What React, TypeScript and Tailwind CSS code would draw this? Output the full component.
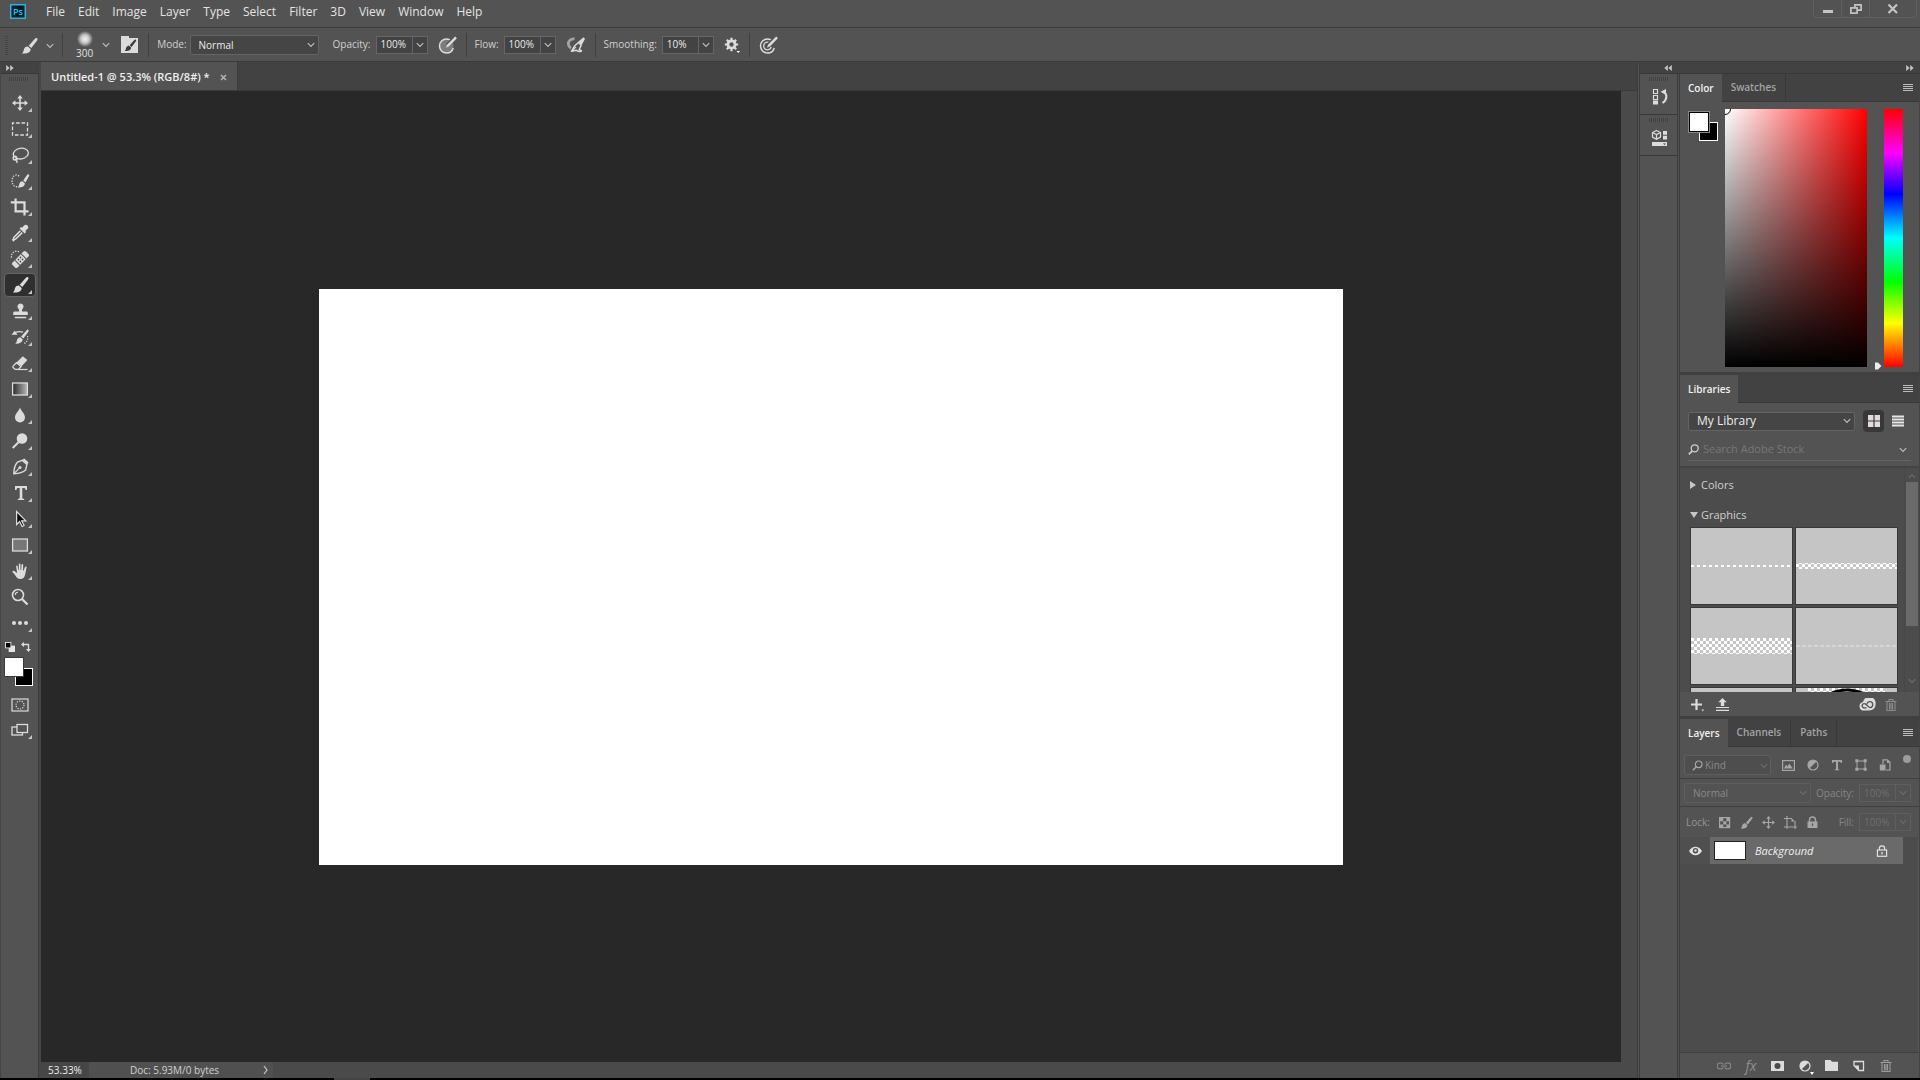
import React, { useState } from "react";
import type { ReactNode } from "react";

const L = "#dcdcdc";

function Svg({ size = 20, className = "", children }: { size?: number; className?: string; children: ReactNode }) {
  return (
    <svg width={size} height={size} viewBox={`0 0 ${size} ${size}`} fill="none" className={`shrink-0 ${className}`} aria-hidden="true">
      {children}
    </svg>
  );
}

const BRUSH_TIP = "M18 2.2c.9.7.6 1.500-.1 2.500l-5.600 7.300-2.600-2.200 6-6.800c.8-.9 1.500-1.400 2.300-.8Z";
const BRUSH_BODY = "M8.900 10.600l2.700 2.300c.4 3-3.100 5.300-8.900 4.500 2-1.100 1.600-2.600 2.400-4.500.7-1.600 2.300-2.500 3.800-2.300Z";

function Brush({ color = L }: { color?: string }) {
  return (
    <g fill={color}>
      <path d={BRUSH_TIP} />
      <path d={BRUSH_BODY} />
    </g>
  );
}

function Chevron({ className = "", dark = false }: { className?: string; dark?: boolean }) {
  return (
    <svg width="8" height="6" viewBox="0 0 8 6" className={`shrink-0 ${className}`} aria-hidden="true">
      <path d="M0.800 1.200 4 4.400 7.200 1.200" fill="none" stroke={dark ? "#6c6c6c" : "#bdbdbd"} strokeWidth="1.200" />
    </svg>
  );
}

const tools: { name: string; icon: ReactNode; plain?: boolean }[] = [
  {
    name: "Move",
    icon: (
      <>
        <path d="M10 4v12M4 10h12" stroke={L} strokeWidth="1.600" />
        <path d="M10 2l2.800 3.400H7.200ZM10 18l2.800-3.400H7.200ZM2 10l3.400-2.800v5.600ZM18 10l-3.400-2.800v5.600Z" fill={L} />
      </>
    ),
  },
  { name: "Marquee", icon: <rect x="2.500" y="4" width="15" height="12" stroke={L} strokeWidth="1.300" strokeDasharray="3.600 1.800" strokeDashoffset="1.800" /> },
  {
    name: "Lasso",
    icon: (
      <g stroke={L} strokeWidth="1.300">
        <ellipse cx="10.800" cy="8.600" rx="7.600" ry="5.300" transform="rotate(-10 10.800 8.600)" />
        <circle cx="5" cy="13" r="1.900" />
        <path d="M5.400 14.500c1.500.8 2 2 1.400 3.600M3.600 14.200c1 .8 2.500.6 4.200-.6" />
      </g>
    ),
  },
  {
    name: "Quick selection",
    icon: (
      <>
        <path d="M9 5.200A4.300 5.900 0 1 0 8 15.300" stroke={L} strokeWidth="1.300" strokeDasharray="1.300 1.300" />
        <path d="M18.800 3.400c.7.600.4 1.300 0 2.100l-3.300 6-2.300-2 3.800-5.400c.5-.8 1.100-1.200 1.800-.7Z" fill={L} />
        <path d="M12.400 10.300l2.400 2c.2 2.800-2.700 4.800-7.200 3.900 1.600-.9 1.300-2.300 1.900-3.800.6-1.400 1.700-2.200 2.900-2.100Z" fill={L} />
      </>
    ),
  },
  { name: "Crop", icon: <path d="M5.600 1.500v12.800h12.900M.8 5.400h13.700v13.100" stroke={L} strokeWidth="2.200" /> },
  {
    name: "Eyedropper",
    icon: (
      <>
        <path d="M17.500 2.400c1.200 1.300.9 2.700-.2 3.700l-2 1.900.8.900-1.500 1.500-5-5 1.500-1.500.9.8 1.800-2c1-1.200 2.500-1.500 3.700-.3Z" fill={L} />
        <path d="M10.200 7.400l-6.400 6.500c-.7.800-.3 1.600-1 2.700.9.900.9.900 0 0 1.100-.6 2-.3 2.700-1l6.500-6.400" transform="translate(.2 .4)" stroke={L} strokeWidth="1.600" />
      </>
    ),
  },
  {
    name: "Spot healing",
    icon: (
      <>
        <path d="M9 2.600a5.500 5 0 0 0-7.200 6.600" stroke={L} strokeWidth="1.300" strokeDasharray="1.300 1.300" />
        <g transform="rotate(-45 10.500 10.500)">
          <rect x="1" y="7" width="19" height="7" rx="1.800" fill={L} />
          <path d="M6 7v7M15 7v7" stroke="#535353" />
          <g fill="#4a4a4a">
            <circle cx="9" cy="9.100" r=".9" />
            <circle cx="12" cy="9.100" r=".9" />
            <circle cx="9" cy="11.900" r=".9" />
            <circle cx="12" cy="11.900" r=".9" />
          </g>
        </g>
      </>
    ),
  },
  { name: "Brush", icon: <Brush /> },
  {
    name: "Clone stamp",
    icon: <path d="M10.500 2.500a3 3 0 0 1 2.300 5c-.9 1.100-.9 1.700-.8 3h4.500c.8 0 1.300.6 1.300 1.400V14H3.200v-2.100c0-.8.500-1.400 1.300-1.400H9c.1-1.300.1-1.900-.8-3a3 3 0 0 1 2.300-5ZM4.800 15.700h11.400v1.600H4.800Z" fill={L} />,
  },
  {
    name: "History brush",
    icon: (
      <>
        <path d="M18.300 2.900c.7.600.4 1.200-.1 2l-4.900 6.500-2.200-1.900 5.400-6c.6-.8 1.200-1.200 1.800-.6Z" fill={L} />
        <path d="M10.300 10.200l2.300 2c.3 2.600-2.600 4.700-7.600 4.600 1.900-1.100 1.500-2.500 2.100-4.100.6-1.500 1.900-2.500 3.200-2.500Z" fill={L} />
        <path d="M4.500 5.700c3-1.200 6-1.300 8.500-.6" stroke={L} strokeWidth="1.200" />
        <path d="M1.500 7.800l3.200-4 2.800 4Z" fill={L} />
        <path d="M17.500 9c1 3-.5 6.200-3.500 7.500" stroke={L} strokeWidth="1.200" strokeDasharray="1.200 1.300" />
      </>
    ),
  },
  {
    name: "Eraser",
    icon: (
      <>
        <path d="M12.800 3.200l4.600 3.700-5.800 6.400-5-3.900Z" fill={L} />
        <path d="M6.400 9.700l4.700 3.800-2.600 2.900H5.200L3 14.600c-.4-.5-.3-1 .1-1.500Z" stroke={L} strokeWidth="1.300" />
        <path d="M7 16.500h10.500" stroke={L} strokeWidth="1.200" />
      </>
    ),
  },
  {
    name: "Gradient",
    icon: (
      <>
        <defs>
          <linearGradient id="toolGradient">
            <stop offset="0" stopColor="#2a2a2a" />
            <stop offset="1" stopColor="#b8b8b8" />
          </linearGradient>
        </defs>
        <rect x="2.600" y="4" width="14.800" height="12" fill="url(#toolGradient)" stroke={L} strokeWidth="1.300" />
      </>
    ),
  },
  { name: "Blur", icon: <path d="M10 2.500c1 3.500 5 6 5 10a5 5 0 0 1-10 0c0-4 4-6.500 5-10Z" fill={L} /> },
  {
    name: "Dodge",
    icon: (
      <>
        <circle cx="12" cy="7.500" r="5.300" fill={L} />
        <path d="M8.500 11.200L2.700 17" stroke={L} strokeWidth="2" />
      </>
    ),
  },
  {
    name: "Pen",
    icon: (
      <>
        <path d="M12.400 3.400l4.500 4.200-1.300 5.500c-2 2-5.600 3.500-11.800 3.600.2-5.900 1.700-9.500 3.600-11.500Z" stroke={L} strokeWidth="1.400" />
        <path d="M12.300 2.800l2-1.200 4.300 4-1.400 1.900Z" fill={L} />
        <path d="M4.200 16.300l5.200-5.200" stroke={L} strokeWidth="1.200" />
        <circle cx="10" cy="10.400" r="1.500" fill={L} />
      </>
    ),
  },
  {
    name: "Type",
    icon: <path d="M5 3h12v4h-1.500c-.1-1.400-.6-1.900-1.800-1.900h-1.400v9.600c0 .8.400 1.100 1.900 1.200V17H7.800v-1.100c1.500-.1 1.900-.4 1.900-1.200V5.100H8.300C7.100 5.100 6.600 5.600 6.500 7H5Z" fill={L} />,
  },
  { name: "Path selection", icon: <path d="M6.600 2.500v13l3-2.900 2.500 4.900 2-1-2.500-4.700h4.200Z" fill="#0c0c0c" stroke={L} strokeWidth="1.200" /> },
  { name: "Rectangle", icon: <rect x="2.600" y="4" width="14.800" height="12" fill="#777" stroke={L} strokeWidth="1.300" /> },
  {
    name: "Hand",
    icon: (
      <path
        d="M6.100 5.200c0-1.100 1.500-1.100 1.600 0L8.300 9h.5V3.300c0-1.200 1.700-1.200 1.700 0V9h.6l.4-5.100c.1-1.100 1.700-1 1.700.1L13 9.600h.6l1.400-3.500c.5-1 1.900-.5 1.600.5-1 3.700-.8 6-2 8.700-.8 1.800-1.700 2.600-4 2.600-2.600 0-3.700-.9-4.700-2.600-.9-1.400-1.900-2.500-3.300-4-.8-.9.3-2 1.400-1.500 1 .5 1.800 1.200 2.500 1.900h.6Z"
        fill={L}
      />
    ),
  },
  {
    name: "Zoom",
    plain: true,
    icon: (
      <>
        <circle cx="8" cy="8" r="5.500" stroke={L} strokeWidth="1.600" />
        <path d="M5.300 8a2.800 2.800 0 0 1 2.700-2.700" stroke={L} strokeWidth="1.100" />
        <path d="M12 12l5.500 5.500" stroke={L} strokeWidth="2.300" />
      </>
    ),
  },
  {
    name: "More tools",
    icon: (
      <g fill={L}>
        <circle cx="4" cy="10" r="2" />
        <circle cx="10" cy="10" r="2" />
        <circle cx="16" cy="10" r="2" />
      </g>
    ),
  },
];

function ToolButton({ name, plain, active, onPick, children }: { name: string; plain?: boolean; active?: boolean; onPick?: () => void; children: ReactNode }) {
  return (
    <button
      aria-label={name}
      onClick={onPick}
      className={`relative my-px flex h-6 w-8 shrink-0 items-center justify-center rounded-sm border ${active ? "border-[#666] bg-[#2f2f2f]" : "border-transparent"}`}
    >
      <Svg>{children}</Svg>
      {!plain && (
        <svg width="4" height="4" viewBox="0 0 4 4" className="absolute bottom-[2px] right-[3px]" aria-hidden="true">
          <path d="M4 0v4H0Z" fill="#c4c4c4" />
        </svg>
      )}
    </button>
  );
}

function Grip({ wide = false }: { wide?: boolean }) {
  return wide ? (
    <div className="h-1 w-5 shrink-0 bg-[repeating-linear-gradient(90deg,#404040_0_1px,#565656_1px_2px)]" />
  ) : (
    <div className="h-5 w-[3px] shrink-0 bg-[repeating-linear-gradient(0deg,#434343_0_1px,#565656_1px_2px)]" />
  );
}

function Rule() {
  return <div className="h-6 w-px shrink-0 bg-[#404040]" />;
}

function PercentField({ id, label, value, dim = false }: { id: string; label: string; value: string; dim?: boolean }) {
  return (
    <div className="flex items-center gap-[5px]">
      <label htmlFor={id} className={dim ? "text-[#868686]" : "text-[#d0d0d0]"}>
        {label}
      </label>
      <div className={`flex h-[18px] items-stretch border ${dim ? "border-[#5e5e5e] text-[#6f6f6f]" : "border-[#666] bg-[#434343] text-[#ececec]"}`}>
        <input id={id} defaultValue={value} className="w-[35px] bg-transparent pl-1 outline-none" />
        <button aria-label={`${label} slider`} className={`flex w-[15px] items-center justify-center border-l ${dim ? "border-[#5e5e5e]" : "border-[#666]"}`}>
          <Chevron dark={dim} />
        </button>
      </div>
    </div>
  );
}

function SelectBox({ label, value, className, dim = false }: { label: string; value: string; className: string; dim?: boolean }) {
  return (
    <div className={`relative flex items-stretch rounded-[2px] border ${dim ? "border-[#5e5e5e] text-[#8a8a8a]" : "border-[#646464] bg-[#454545] text-[#ececec]"} ${className}`}>
      <select aria-label={label} className="w-full appearance-none bg-transparent pl-2 outline-none">
        <option>{value}</option>
      </select>
      <Chevron dark={dim} className="pointer-events-none absolute right-[3px] top-1/2 -translate-y-1/2" />
    </div>
  );
}

function PressureIcon({ rings }: { rings?: boolean }) {
  return (
    <Svg>
      <circle cx="8.500" cy="11" r="7" stroke={L} strokeWidth="1.500" fill={rings ? "none" : "#7c7c7c"} strokeDasharray="36 8" strokeDashoffset="-2" />
      {rings && <circle cx="8.500" cy="11" r="3.800" stroke={L} strokeWidth="1.300" strokeDasharray="19 5" strokeDashoffset="-1" />}
      <path d="M9.500 10L17.500 2" stroke="#535353" strokeWidth="4" />
      <path d="M17.200 1.600l1.700 1.700-7.800 7.900-3.200 1.500 1.400-3.200Z" fill={L} />
    </Svg>
  );
}

function AirbrushIcon() {
  return (
    <Svg>
      <path d="M8.500 4C4.800 3.500 2 6 2.400 9.400c.2 1.700 1.100 3 2.600 3.800" stroke="#a4a4a4" strokeWidth="2.800" />
      <path d="M5.500 16.300l3-5.300 4-3.500 2.700 2.700-2 4.300 2.300 1.300c-1.600 1.200-3.300.9-5-.6Z" stroke={L} strokeWidth="1.500" strokeLinejoin="round" />
      <path d="M5.500 16.300l4.500-4.500" stroke={L} strokeWidth="1.200" />
      <path d="M17.500 2.300l1.500 1.400-3.200 6.400-3.600-3.400Z" fill={L} />
    </Svg>
  );
}

function MenuLines() {
  return (
    <button aria-label="Panel menu" className="ml-auto mr-[6px] flex w-[10px] flex-col gap-px">
      <span className="h-px bg-[#bcbcbc]" />
      <span className="h-px bg-[#bcbcbc]" />
      <span className="h-px bg-[#bcbcbc]" />
      <span className="h-px bg-[#bcbcbc]" />
    </button>
  );
}

function PanelTabs({ tabs }: { tabs: string[] }) {
  return (
    <div role="tablist" className="flex h-7 shrink-0 items-stretch bg-[#424242] text-[10px] font-semibold">
      {tabs.map((t, i) => (
        <button
          key={t}
          role="tab"
          aria-selected={i === 0}
          className={i === 0 ? "bg-[#535353] px-2 text-[#f2f2f2]" : "border-b border-r border-[#383838] px-[9px] text-[#a4a4a4]"}
        >
          {t}
        </button>
      ))}
      <div className="flex flex-1 items-center border-b border-[#383838]">
        <MenuLines />
      </div>
    </div>
  );
}

function DoubleArrow({ left = false }: { left?: boolean }) {
  return (
    <svg width="8" height="6" viewBox="0 0 8 6" className={left ? "rotate-180" : ""} aria-hidden="true">
      <path d="M.5.500L3.300 3 .5 5.500ZM4.500.500L7.300 3 4.500 5.500Z" fill="#c8c8c8" stroke="#c8c8c8" strokeWidth=".6" />
    </svg>
  );
}

function TrashIcon({ color = "#8c8c8c" }: { color?: string }) {
  return (
    <Svg size={14}>
      <path d="M1.500 3.500h11M5 3V1.500h4V3M3 4v8.500h8V4M5.500 5v6.500M7 5v6.500M8.500 5v6.500" stroke={color} strokeWidth="1.100" />
    </Svg>
  );
}

function AdjustIcon({ color }: { color: string }) {
  return (
    <Svg size={12}>
      <circle cx="6" cy="6" r="5" stroke={color} strokeWidth="1.200" />
      <path d="M9.600 2.400A5 5 0 0 0 2.400 9.600Z" fill={color} />
    </Svg>
  );
}

function ColorPanel() {
  return (
    <section aria-label="Color" className="flex flex-col bg-[#535353]">
      <PanelTabs tabs={["Color", "Swatches"]} />
      <div className="flex items-start pb-[5px] pl-2 pr-4 pt-[7px]">
        <div className="relative mt-[2px] h-8 w-[37px] shrink-0">
          <button aria-label="Background color" className="absolute left-[11px] top-[11px] h-[19px] w-[19px] border border-white bg-black" />
          <button aria-label="Foreground color" className="absolute left-0 top-0 h-[22px] w-[22px] border border-[#888] bg-white outline-1 -outline-offset-2 outline-black" />
        </div>
        <div className="relative h-[258px] flex-1 overflow-hidden bg-[linear-gradient(to_top,#000,transparent),linear-gradient(to_right,#fff,#f00)]">
          <span className="absolute -left-[6px] -top-[6px] h-3 w-3 rounded-full border border-black" />
        </div>
        <svg width="8" height="8" viewBox="0 0 8 8" className="-mb-[3px] ml-[7px] mr-[2px] self-end" aria-hidden="true">
          <path d="M1 .5h3L7.500 4 4 7.500H1Z" fill="#ececec" />
        </svg>
        <div className="h-[258px] w-[19px] shrink-0 bg-[linear-gradient(to_bottom,#f00,#f0f_17%,#00f_33%,#0ff_50%,#0f0_67%,#ff0_83%,#f00)]" />
      </div>
    </section>
  );
}

function Thumb({ name, children }: { name: string; children?: ReactNode }) {
  return (
    <button aria-label={name} className="h-[78px] w-[103px] border border-[#383838] bg-[#c5c5c5]">
      <svg width="101" height="76" viewBox="0 0 101 76" className="block" aria-hidden="true">
        {children}
      </svg>
    </button>
  );
}

function LibrariesPanel() {
  return (
    <section aria-label="Libraries" className="flex flex-col bg-[#535353]">
      <PanelTabs tabs={["Libraries"]} />
      <div className="flex items-center px-2 pt-[7px] text-xs">
        <SelectBox label="Library" value="My Library" className="h-[19px] flex-1" />
        <button aria-label="Grid view" className="ml-2 flex h-[22px] w-[21px] items-center justify-center rounded-sm bg-[#383838]">
          <Svg size={12}>
            <path d="M0 0h5.400v5.400H0ZM6.600 0H12v5.400H6.600ZM0 6.600h5.400V12H0ZM6.600 6.600H12V12H6.600Z" fill="#e3dadd" />
          </Svg>
        </button>
        <button aria-label="List view" className="ml-2 mr-[7px]">
          <Svg size={12}>
            <path d="M0 1.500h12M0 4.500h12M0 7.500h12M0 10.500h12" stroke="#e6e6e6" strokeWidth="1.900" />
          </Svg>
        </button>
      </div>
      <div className="mx-2 mb-[5px] mt-[7px] flex h-[22px] items-center border-b border-[#636363] text-[11px]">
        <Svg size={11}>
          <circle cx="6.700" cy="4.300" r="3.500" stroke="#cfcfcf" strokeWidth="1.300" />
          <path d="M4.300 6.800L.8 10.300" stroke="#cfcfcf" strokeWidth="1.700" />
        </Svg>
        <input aria-label="Search Adobe Stock" placeholder="Search Adobe Stock" className="ml-1 min-w-0 flex-1 bg-transparent outline-none placeholder:text-[#777]" />
        <Chevron className="mr-1" />
      </div>
      <div className="flex h-[226px] border-t-2 border-[#444] bg-[#4c4c4c]">
        <div className="min-w-0 flex-1 overflow-hidden pl-[10px] text-[11px] text-[#cfcfcf]">
          <button className="mt-[9px] flex h-4 items-center gap-[5px]">
            <svg width="6" height="8" viewBox="0 0 6 8" aria-hidden="true">
              <path d="M0 0l6 4-6 4Z" fill="#c6c6c6" />
            </svg>
            Colors
          </button>
          <button className="mb-1 mt-[14px] flex h-4 items-center gap-[3px]">
            <svg width="8" height="6" viewBox="0 0 8 6" aria-hidden="true">
              <path d="M0 0h8L4 6Z" fill="#c6c6c6" />
            </svg>
            Graphics
          </button>
          <svg width="0" height="0" className="absolute" aria-hidden="true">
            <defs>
              <pattern id="check" width="6" height="6" patternUnits="userSpaceOnUse">
                <path d="M0 0h3v3H0ZM3 3h3v3H3Z" fill="#fff" />
              </pattern>
            </defs>
          </svg>
          <div className="grid grid-cols-[103px_103px] gap-[2px]">
            <Thumb name="Dashed line">
              <path d="M0 38h101" stroke="#fff" strokeWidth="2" strokeDasharray="3 3" />
            </Thumb>
            <Thumb name="Thin checks">
              <rect y="35" width="101" height="6" fill="url(#check)" />
            </Thumb>
            <Thumb name="Wide checks">
              <rect y="30" width="101" height="16" fill="url(#check)" />
            </Thumb>
            <Thumb name="Hairline">
              <path d="M0 38h101" stroke="#e6e6e6" strokeDasharray="4 2" />
            </Thumb>
            <Thumb name="Blank graphic" />
            <Thumb name="Ring">
              <rect x="12" width="77" height="76" fill="url(#check)" />
              <circle cx="51" cy="39" r="37" stroke="#000" strokeWidth="3" fill="#fff" />
            </Thumb>
          </div>
        </div>
        <div className="flex w-[15px] flex-col items-center border-l border-[#484848] pb-2 pt-[5px]">
          <Chevron dark className="rotate-180" />
          <div className="mt-[3px] h-[144px] w-3 bg-[#6a6a6a]" />
          <Chevron dark className="mt-auto" />
        </div>
      </div>
      <div className="flex h-6 items-center px-[10px] pt-px">
        <button aria-label="Add content" className="mr-3">
          <Svg size={14}>
            <path d="M6.500 1v11M1 6.500h11" stroke={L} strokeWidth="2.200" />
            <path d="M11.500 11.500h2.500l-1.200 2Z" fill={L} />
          </Svg>
        </button>
        <button aria-label="Upload">
          <Svg size={13}>
            <path d="M6.500 0l4.200 4.300H8.200V8H4.800V4.300H2.300Z" fill={L} />
            <path d="M0 9.500h13M0 12.300h13" stroke={L} strokeWidth="1.200" />
          </Svg>
        </button>
        <button aria-label="Creative Cloud" className="ml-auto mr-2">
          <svg width="17" height="13" viewBox="0 0 17 13" fill="none" aria-hidden="true">
            <path d="M4.900 12.600A4.400 4.400 0 0 1 4 3.900 6.200 6.200 0 0 1 16.500 6.400a6 6 0 0 1-6 6.200Z" fill={L} />
            <path d="M7.600 9.800H5.200a2.100 2.100 0 0 1 .2-4.200c1.300 0 2 .7 2.900 1.900s1.500 2.100 2.700 2.100a3 3 0 1 0-3.100-3.900" stroke="#535353" strokeWidth="1.300" />
          </svg>
        </button>
        <button aria-label="Delete" className="mr-[11px]">
          <TrashIcon />
        </button>
      </div>
    </section>
  );
}

function LayersPanel() {
  const g = "#a6a6a6";
  return (
    <section aria-label="Layers" className="flex min-h-0 flex-1 flex-col bg-[#4f4f4f] text-[10px]">
      <PanelTabs tabs={["Layers", "Channels", "Paths"]} />
      <div className="flex h-8 items-center border-b border-[#404040] bg-[#535353] pl-1 pr-2 pt-[5px] text-[#8a8a8a]">
        <div className="relative flex h-5 w-[87px] items-stretch rounded-[2px] border border-[#5e5e5e] bg-[#4e4e4e]">
          <select aria-label="Filter layers" className="w-full appearance-none bg-transparent pl-[20px] outline-none">
            <option>Kind</option>
          </select>
          <Svg size={11} className="pointer-events-none absolute left-[7px] top-1">
            <circle cx="6.700" cy="4.300" r="3.300" stroke={g} strokeWidth="1.200" />
            <path d="M4.300 6.800L.8 10.300" stroke={g} strokeWidth="1.400" />
          </Svg>
          <Chevron dark className="pointer-events-none absolute right-[2px] top-[7px]" />
        </div>
        <div className="ml-[11px] flex flex-1 items-center justify-between">
          <button aria-label="Pixel layers">
            <Svg size={13}>
              <rect x=".6" y="1.600" width="11.800" height="9.800" stroke={g} strokeWidth="1.200" />
              <path d="M2 9.500l2-4 1.500 2 1.700-3L11 9.500Z" fill={g} />
            </Svg>
          </button>
          <button aria-label="Adjustment layers">
            <AdjustIcon color={g} />
          </button>
          <button aria-label="Type layers">
            <Svg size={12}>
              <path d="M1 1h10v3H9.800c0-1-.4-1.300-1.300-1.300H7v7c0 .5.300.7 1.300.8v.7H3.700v-.7c1-.1 1.300-.3 1.300-.8v-7H3.500c-.9 0-1.300.3-1.300 1.300H1Z" fill={g} />
            </Svg>
          </button>
          <button aria-label="Shape layers">
            <Svg size={12}>
              <rect x="2" y="2" width="8" height="8" stroke={g} strokeWidth="1" />
              <path d="M.3.300h3v3h-3ZM8.700.300h3v3h-3ZM.3 8.700h3v3h-3ZM8.700 8.700h3v3h-3Z" fill={g} />
            </Svg>
          </button>
          <button aria-label="Smart objects">
            <Svg size={12}>
              <path d="M4 5V.8h4.500L11 3.300V11H7" stroke={g} strokeWidth="1.200" />
              <path d="M8 .8V4h3M.8 5.500h5.700V11.500H.8Z" fill={g} />
            </Svg>
          </button>
          <button aria-label="Toggle filter" className="mb-3 h-2 w-2 rounded-full bg-[#9c9c9c]" />
        </div>
      </div>
      <div className="flex h-7 items-center justify-between border-b border-[#404040] bg-[#535353] pl-1 pr-2 pt-px">
        <SelectBox dim label="Blend mode" value="Normal" className="h-5 w-[127px]" />
        <PercentField dim id="layer-opacity" label="Opacity:" value="100%" />
      </div>
      <div className="flex h-[30px] items-center bg-[#535353] pl-[6px] pr-2">
        <span className="text-[#969696]">Lock:</span>
        <div className="ml-2 flex items-center gap-[9px]">
          <button aria-label="Lock transparency">
            <Svg size={13}>
              <rect x="1.600" y="1.600" width="10" height="10" stroke={g} strokeWidth="1.200" />
              <path d="M2 2h3.200v3.200H2ZM8.400 2h3.200v3.200H8.400ZM5.200 5.200h3.200v3.200H5.200ZM2 8.400h3.200v3.200H2ZM8.400 8.400h3.200v3.200H8.400Z" fill={g} />
            </Svg>
          </button>
          <button aria-label="Lock pixels">
            <svg width="13" height="13" viewBox="2 1 17 17" aria-hidden="true">
              <Brush color={g} />
            </svg>
          </button>
          <button aria-label="Lock position">
            <svg width="13" height="13" viewBox="2 2 16 16" aria-hidden="true">
              <path d="M10 4v12M4 10h12" stroke={g} strokeWidth="1.500" />
              <path d="M10 2l2.800 3.400H7.200ZM10 18l2.800-3.400H7.200ZM2 10l3.400-2.800v5.600ZM18 10l-3.400-2.800v5.600Z" fill={g} />
            </svg>
          </button>
          <button aria-label="Lock artboard">
            <Svg size={13}>
              <path d="M3 0v13M0 2.500h8M0 11h13M11 5v8" stroke={g} strokeWidth="1.100" />
              <path d="M7.500 2l3.500 3.500H7.500Z" fill={g} />
            </Svg>
          </button>
          <button aria-label="Lock all">
            <Svg size={13}>
              <path d="M3.500 6V4a3 3 0 0 1 6 0v2" stroke={g} strokeWidth="1.400" />
              <rect x="1.500" y="5.500" width="10" height="6.500" fill={g} />
              <path d="M6.500 7.500v2.500" stroke="#535353" strokeWidth="1.200" />
            </Svg>
          </button>
        </div>
        <div className="ml-auto">
          <PercentField dim id="layer-fill" label="Fill:" value="100%" />
        </div>
      </div>
      <div className="flex min-h-0 flex-1 flex-col border-r border-[#565656] bg-[#4c4c4c]">
        <div className="mr-[15px] flex h-[27px] items-stretch">
          <button aria-label="Toggle visibility" className="flex w-[30px] items-center justify-center bg-[#4f4f4f]">
            <svg width="13" height="10" viewBox="0 0 13 10" aria-hidden="true">
              <path d="M0 5c2-3 4-4.300 6.500-4.300S11 2 13 5c-2 3-4 4.300-6.500 4.300S2 8 0 5Z" fill="#e2e2e2" />
              <circle cx="6.500" cy="4.700" r="2.700" fill="#4f4f4f" />
              <circle cx="6.500" cy="4.500" r="1.200" fill="#e2e2e2" />
            </svg>
          </button>
          <button className="flex flex-1 items-center bg-[#6a6a6a] px-1 text-[11px] italic text-[#f0f0f0]">
            <span className="h-[19px] w-8 border border-[#222] bg-white" />
            <span className="ml-[9px] pt-[2px]">Background</span>
            <Svg size={12} className="ml-auto mr-[11px]">
              <path d="M3.300 5V3.500a2.700 2.700 0 0 1 5.400 0V5" stroke="#e0e0e0" strokeWidth="1.200" />
              <rect x="1.400" y="5" width="9.200" height="6.300" stroke="#e0e0e0" strokeWidth="1.200" />
              <path d="M6 7v2.400" stroke="#e0e0e0" strokeWidth="1.300" />
            </Svg>
          </button>
        </div>
      </div>
      <div className="flex h-[26px] items-center gap-[13px] border-t border-[#404040] bg-[#535353] pl-[37px]">
        <button aria-label="Link layers">
          <svg width="14" height="8" viewBox="0 0 14 8" fill="none" aria-hidden="true">
            <path d="M6.200 2.500A2.500 2.500 0 0 0 4 1H3a3 3 0 0 0 0 6h1a2.500 2.500 0 0 0 2.200-1.500M7.800 2.500A2.500 2.500 0 0 1 10 1h1a3 3 0 0 1 0 6h-1a2.500 2.500 0 0 1-2.200-1.500M4 4h6" stroke="#8c8c8c" strokeWidth="1.200" />
          </svg>
        </button>
        <button aria-label="Layer style" className="w-[14px] text-sm leading-none italic text-[#8f8f8f]">
          fx
        </button>
        <button aria-label="Layer mask">
          <svg width="13" height="10" viewBox="0 0 13 10" aria-hidden="true">
            <rect width="13" height="10" fill={L} />
            <circle cx="6.500" cy="5" r="3" fill="#4a4a4a" />
          </svg>
        </button>
        <button aria-label="Adjustment layer" className="relative ml-[2px]">
          <AdjustIcon color={L} />
          <svg width="4" height="3" viewBox="0 0 4 3" className="absolute -bottom-[3px] -right-[3px]" aria-hidden="true">
            <path d="M0 0h4L2 3Z" fill="#fff" />
          </svg>
        </button>
        <button aria-label="New group" className="ml-px">
          <svg width="13" height="11" viewBox="0 0 13 11" aria-hidden="true">
            <path d="M0 0h5.500l1.500 1.800h6V11H0Z" fill={L} />
          </svg>
        </button>
        <button aria-label="New layer" className="ml-[2px]">
          <Svg size={12}>
            <path d="M1 5.500V1.500h9.500v9H6Z" stroke={L} strokeWidth="1.300" />
            <path d="M1 5.500h5v5.500Z" fill={L} />
          </Svg>
        </button>
        <button aria-label="Delete layer" className="ml-px">
          <TrashIcon color="#9a9a9a" />
        </button>
      </div>
    </section>
  );
}

export default function App() {
  const [tool, setTool] = useState("Brush");
  return (
    <div className="flex h-screen flex-col overflow-hidden bg-[#535353] font-['Open_Sans','Noto_Sans',sans-serif] text-[10px] text-[#dcdcdc]">
      <header className="flex h-7 shrink-0 items-start border-b border-[#3a3a3a]">
        <svg width="16" height="15" viewBox="0 0 16 15" className="ml-[10px] mt-1 shrink-0" role="img" aria-label="Ps">
          <rect x=".75" y=".75" width="14.500" height="13.500" fill="#001d26" stroke="#2bb3dc" strokeWidth="1.500" />
          <text x="8" y="11" textAnchor="middle" fontFamily="Open Sans" fontSize="9" fontWeight="600" fill="#31c5f0">
            Ps
          </text>
        </svg>
        <nav aria-label="Main" className="ml-[14px] flex h-6 items-center gap-px text-xs text-[#e4e4e4]">
          {["File", "Edit", "Image", "Layer", "Type", "Select", "Filter", "3D", "View", "Window", "Help"].map((m) => (
            <button key={m} className="px-[6px]">
              {m}
            </button>
          ))}
        </nav>
        <div className="ml-auto mr-[3px] flex h-[18px] rounded-b border border-t-0 border-[#606060]">
          <button aria-label="Minimize" className="flex w-7 items-center justify-center border-r border-[#606060] pt-[6px]">
            <span className="h-[3px] w-[10px] bg-[#c4c4c4]" />
          </button>
          <button aria-label="Restore" className="flex w-7 items-center justify-center border-r border-[#606060]">
            <Svg size={12}>
              <path d="M4.900 4V1.900h6.200v5.200H8" stroke="#c4c4c4" strokeWidth="1.700" />
              <rect x=".9" y="4.900" width="6.200" height="5.200" stroke="#c4c4c4" strokeWidth="1.700" />
            </Svg>
          </button>
          <button aria-label="Close" className="flex w-[46px] items-center justify-center">
            <Svg size={12}>
              <path d="M1.500 1.500l8.500 8.500M10 1.500L1.500 10" stroke="#c4c4c4" strokeWidth="2.200" />
            </Svg>
          </button>
        </div>
      </header>

      <div role="toolbar" aria-label="Brush options" className="flex h-[34px] shrink-0 items-center border-b border-[#3a3a3a] pl-[5px]">
        <Grip />
        <button aria-label="Brush preset" className="ml-[11px] mt-[2px] flex w-[35px] items-center justify-between">
          <Svg>
            <Brush />
          </Svg>
          <Chevron />
        </button>
        <div className="ml-2">
          <Rule />
        </div>
        <button className="ml-[13px] flex flex-col items-center text-[#e0e0e0]">
          <span className="h-4 w-4 rounded-full bg-[radial-gradient(circle,#f4f4f4_0%,#c9c9c9_35%,#535353_72%)]" />
          <span className="h-3 leading-3">300</span>
        </button>
        <Chevron className="ml-[9px]" />
        <button aria-label="Brush settings" className="ml-[11px] mt-px">
          <Svg size={18}>
            <path d="M0 0h8v2h9v15H0Z" fill={L} />
            <g transform="translate(1.500 2) scale(.74)">
              <Brush color="#3c3c3c" />
            </g>
          </Svg>
        </button>
        <div className="ml-[9px] mr-2">
          <Rule />
        </div>
        <span className="mr-[3px] text-[#d0d0d0]">Mode:</span>
        <SelectBox label="Mode" value="Normal" className="mr-[14px] mt-px h-5 w-[129px]" />
        <PercentField id="opacity" label="Opacity:" value="100%" />
        <button aria-label="Pressure controls opacity" className="ml-[10px]">
          <PressureIcon />
        </button>
        <div className="mx-2">
          <Rule />
        </div>
        <PercentField id="flow" label="Flow:" value="100%" />
        <button aria-label="Airbrush" className="ml-[10px]">
          <AirbrushIcon />
        </button>
        <div className="ml-[9px] mr-2">
          <Rule />
        </div>
        <PercentField id="smoothing" label="Smoothing:" value="10%" />
        <button aria-label="Smoothing options" className="ml-[10px]">
          <Svg size={16}>
            <circle cx="7.500" cy="7.500" r="3.600" stroke={L} strokeWidth="2.800" />
            <path d="M7.500.8v2.500M7.500 11.700v2.500M.8 7.500h2.500M11.700 7.500h2.500M2.800 2.800l1.700 1.700M10.500 10.500l1.700 1.700M12.200 2.800l-1.700 1.700M4.500 10.500l-1.700 1.700" stroke={L} strokeWidth="2.200" />
            <path d="M12.500 14h3.500l-1.700 2Z" fill="#fff" />
          </Svg>
        </button>
        <div className="mx-[9px]">
          <Rule />
        </div>
        <button aria-label="Pressure controls size">
          <PressureIcon rings />
        </button>
      </div>

      <div className="flex min-h-0 flex-1">
        <aside aria-label="Tools" className="flex w-[41px] shrink-0 flex-col border-l border-r-2 border-[#464646]">
          <button aria-label="Expand tools" className="flex h-3 items-center border-b border-[#383838] bg-[#424242] pl-[5px]">
            <DoubleArrow />
          </button>
          <div className="flex flex-1 flex-col border-r border-[#3c3c3c] pl-[3px]">
            <div className="mt-[3px] flex justify-center pr-1">
              <Grip wide />
            </div>
            <div className="mt-[9px] flex flex-col">
              {tools.map((t) => (
                <ToolButton key={t.name} name={t.name} plain={t.plain} active={t.name === tool} onPick={() => setTool(t.name)}>
                  {t.icon}
                </ToolButton>
              ))}
            </div>
            <div className="mt-[6px] flex items-center gap-[6px]">
              <button aria-label="Default colors" className="ml-px">
                <svg width="10" height="10" viewBox="0 0 11 11" aria-hidden="true">
                  <rect x="4" y="4" width="7" height="7" fill="#e4e4e4" />
                  <rect x=".5" y=".5" width="6" height="6" fill="#000" stroke="#e4e4e4" />
                </svg>
              </button>
              <button aria-label="Switch colors">
                <svg width="10" height="10" viewBox="0 0 10 10" aria-hidden="true">
                  <path d="M2 2.500h5.500V8" fill="none" stroke={L} strokeWidth="1.300" />
                  <path d="M0 2.500L3 0v5ZM7.500 10L5 7h5Z" fill={L} />
                </svg>
              </button>
            </div>
            <div className="relative mt-[5px] h-[30px] w-[30px]">
              <button aria-label="Background" className="absolute left-[11px] top-[11px] h-[18px] w-[18px] border border-white bg-black" />
              <button aria-label="Foreground" className="absolute left-0 top-0 h-5 w-5 border border-[#3a3a3a] bg-white" />
            </div>
            <div className="mt-[5px]">
              <ToolButton name="Quick mask" plain>
                <rect x="2" y="4" width="16" height="12" stroke={L} strokeWidth="1.200" />
                <circle cx="10" cy="10" r="4" stroke={L} strokeWidth="1.200" strokeDasharray="1.200 1.300" />
              </ToolButton>
              <ToolButton name="Screen mode">
                <rect x="2" y="7" width="10.500" height="8" stroke={L} strokeWidth="1.300" />
                <rect x="7" y="4.500" width="10.500" height="8" fill="#535353" stroke={L} strokeWidth="1.300" />
              </ToolButton>
            </div>
          </div>
        </aside>

        <main className="flex min-w-0 flex-1 flex-col">
          <div role="tablist" className="flex h-[29px] shrink-0 items-stretch border-b border-[#3a3a3a] bg-[#424242]">
            <div className="flex items-center gap-[10px] border-r border-[#3a3a3a] bg-[#535353] px-[10px] pt-[2px]">
              <button role="tab" aria-selected="true" className="text-[11px] font-semibold text-[#f0f0f0]">
                Untitled-1 @ 53.3% (RGB/8#) *
              </button>
              <button aria-label="Close document">
                <Svg size={7}>
                  <path d="M1 1l5 5M6 1L1 6" stroke="#b4b4b4" strokeWidth="1.500" />
                </Svg>
              </button>
            </div>
          </div>
          <div className="flex min-h-0 flex-1">
            <div className="flex min-w-0 flex-1 items-center justify-center bg-[#282828]">
              <div className="aspect-video w-[1024px] shrink-0 bg-white" />
            </div>
            <div className="w-4 shrink-0 bg-[#4a4a4a]" />
          </div>
          <footer className="flex h-4 shrink-0 items-stretch bg-[#4a4a4a]">
            <div className="flex w-12 items-center justify-center bg-[#464646] text-[#ececec]">53.33%</div>
            <button className="flex w-[184px] items-center justify-between bg-[#505050] pl-[41px] pr-[5px] text-[#d0d0d0]">
              Doc: 5.93M/0 bytes
              <svg width="5" height="10" viewBox="0 0 5 10" aria-hidden="true">
                <path d="M1 1l3 4-3 4" fill="none" stroke="#c8c8c8" strokeWidth="1.200" />
              </svg>
            </button>
          </footer>
        </main>

        <div className="flex shrink-0 flex-col border-l-[3px] border-double border-[#3c3c3c]">
          <div className="flex h-3 shrink-0 items-center border-b border-[#383838] bg-[#424242]">
            <button aria-label="Expand dock" className="ml-6">
              <DoubleArrow left />
            </button>
            <button aria-label="Collapse panels" className="ml-auto mr-[6px]">
              <DoubleArrow />
            </button>
          </div>
          <div className="flex min-h-0 flex-1">
            <div className="flex w-10 shrink-0 flex-col border-r-[3px] border-double border-[#3c3c3c]">
              <div className="flex h-[41px] flex-col items-center border-b border-[#383838] pt-[3px]">
                <Grip wide />
                <button aria-label="History" className="ml-[2px] mt-[6px]">
                  <Svg size={18}>
                    <path d="M2.500 2.500h4v4h-4ZM2.500 8.500h4v4h-4Z" stroke={L} strokeWidth="1.200" />
                    <path d="M2 13.500h5v4H2ZM9.500 4.800L15 2v6Z" fill={L} />
                    <path d="M12.500 4.500c4 2.500 4 8-1 11.500" stroke={L} strokeWidth="2" />
                  </Svg>
                </button>
              </div>
              <div className="flex h-[41px] flex-col items-center border-b border-[#383838] pt-[3px]">
                <Grip wide />
                <button aria-label="Libraries dock" className="ml-[2px] mt-[7px]">
                  <Svg size={18}>
                    <path d="M5.500 1.500l4 2v4.600l-4 2.100-4-2.100V3.500ZM1.500 3.500l4 2 4-2M5.500 5.500v4.700" stroke={L} strokeWidth="1.200" />
                    <path d="M12 2h4v3.800h-4ZM12 6.800h4v3.700h-4ZM1 13h15v4H1Z" fill={L} />
                    <path d="M12 14.500h3l-1.500 1.500Z" fill="#444" />
                  </Svg>
                </button>
              </div>
            </div>
            <div className="flex w-[240px] shrink-0 flex-col gap-[3px] border-r border-[#444] bg-[#404040]">
              <ColorPanel />
              <LibrariesPanel />
              <LayersPanel />
            </div>
          </div>
        </div>
      </div>

      <div className="flex h-[2px] shrink-0 bg-black">
        <div className="ml-[334px] w-9 bg-[#444]" />
      </div>
    </div>
  );
}
